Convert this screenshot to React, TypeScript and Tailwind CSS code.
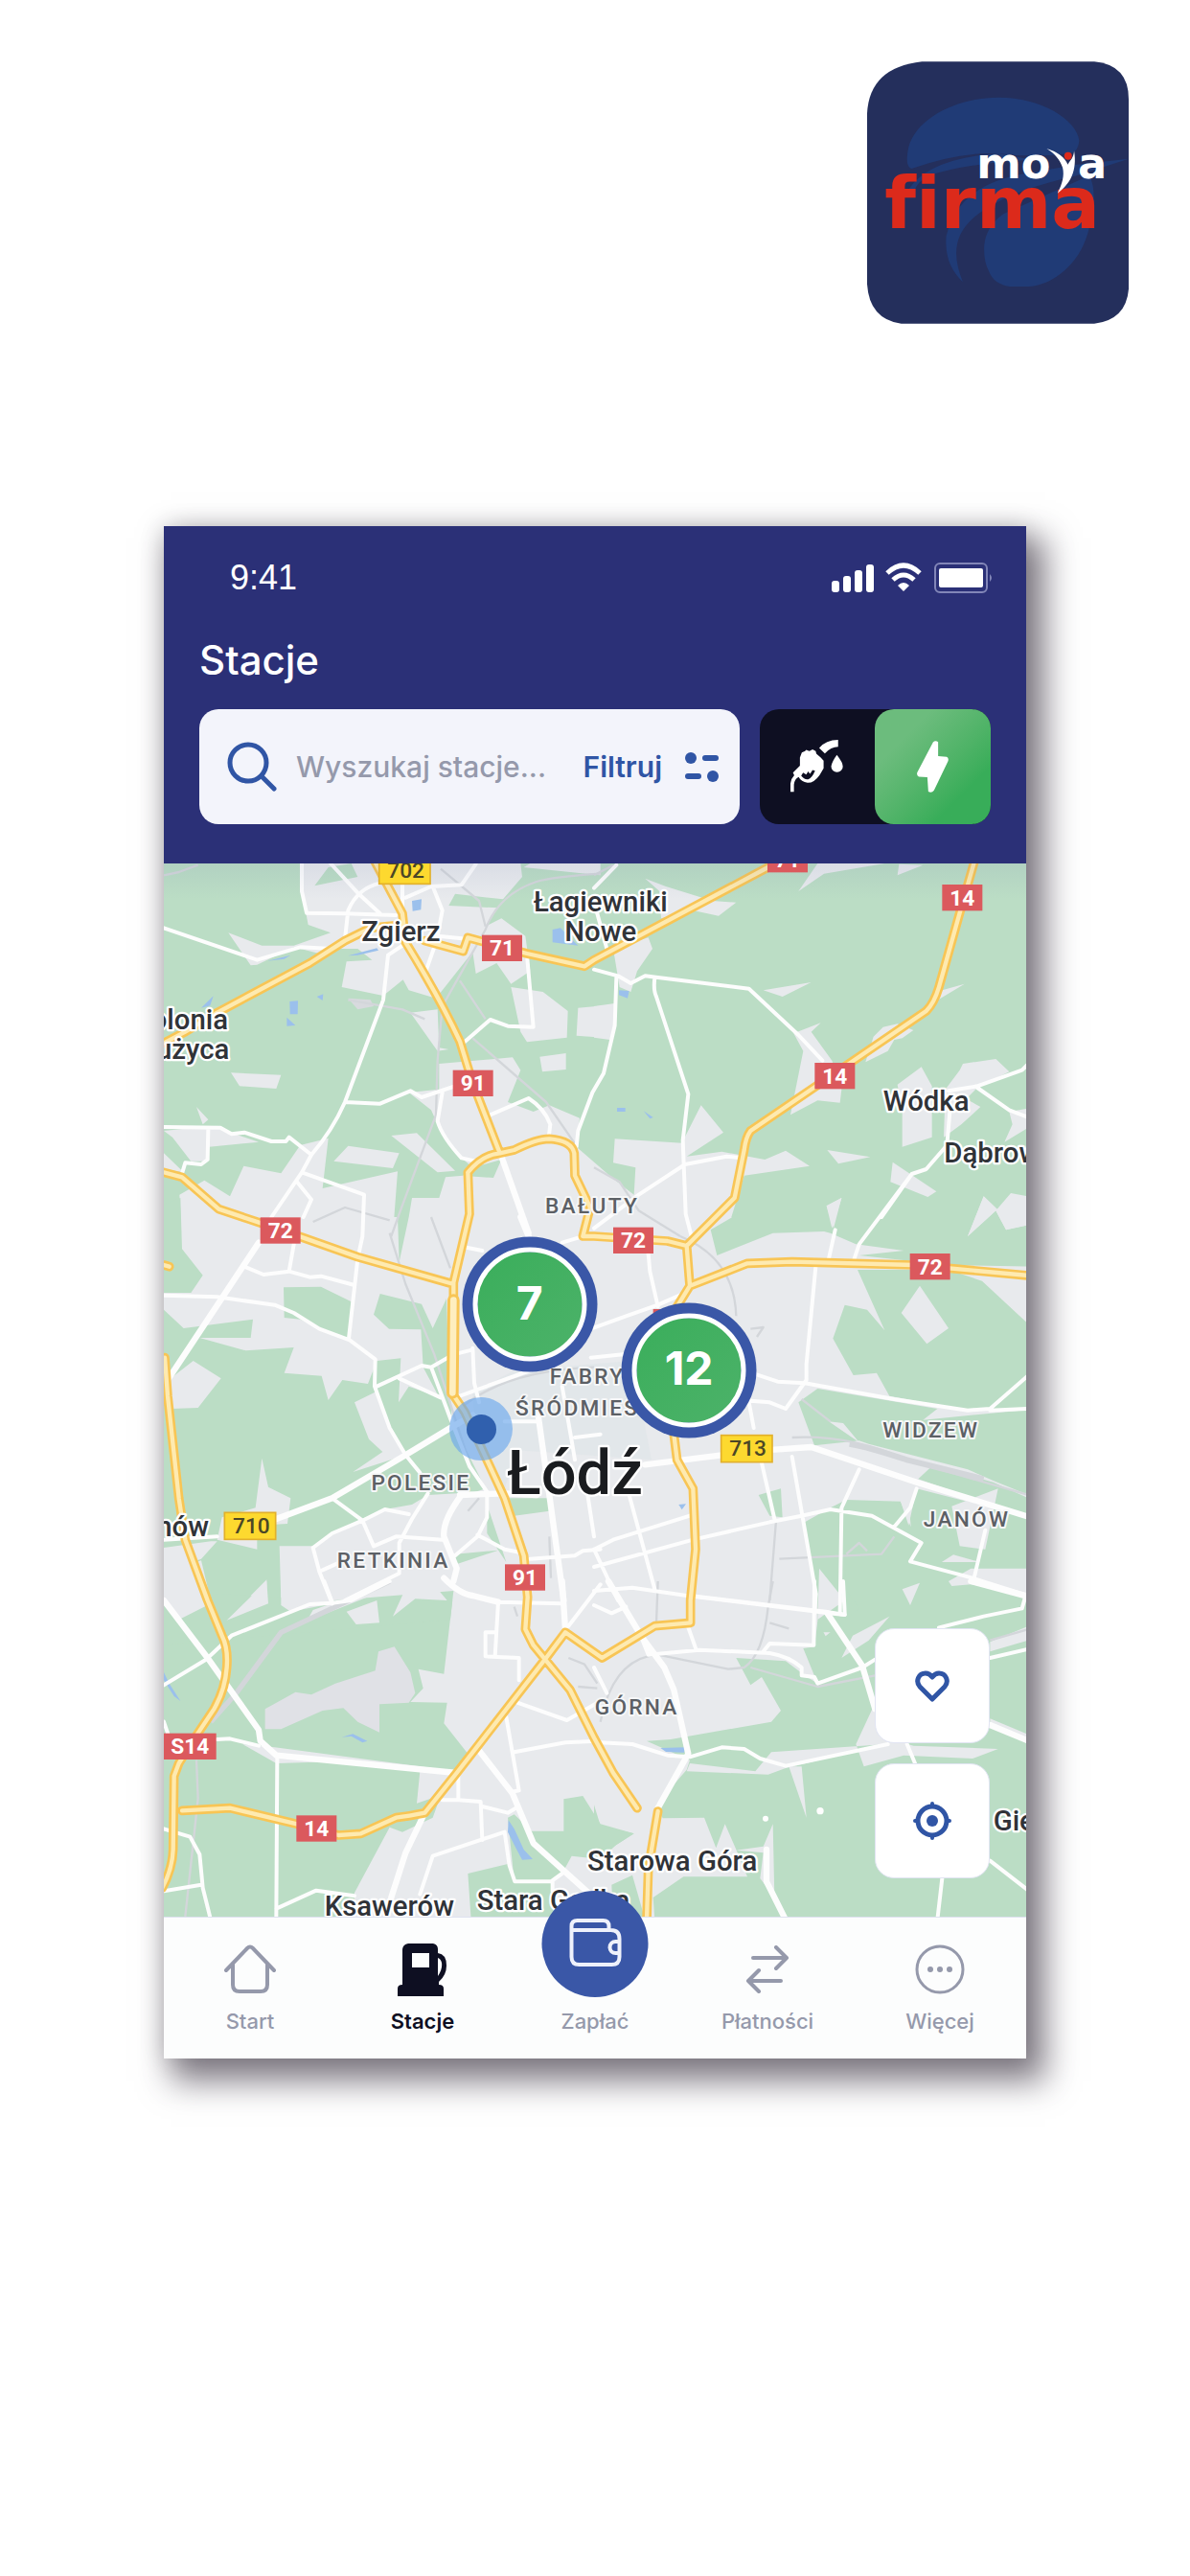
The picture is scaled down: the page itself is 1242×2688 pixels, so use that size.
import React from "react";

type Tile = {
  x: number;
  y: number;
  city: string;
  forest: string;
  field: string;
  rail: string;
  minor: string;
  main: string;
  water: string;
};

/* Each tile holds its own local coordinates and is shifted into the shared map space. */
const tiles: Tile[] = [
  {
    x: 0,
    y: 0,
    city:
      "M470,33L1150,33L1155,75L1095,145L945,128L925,165L1080,172L1040,230L1090,205L1165,260L1180,370L1120,410L1075,345L1010,378L1000,310L885,455L800,430L782,397L720,447L590,420L605,340L685,335L640,300L560,300L540,320L440,295L325,350L305,352L235,250L340,290L440,290L555,250L485,225L465,120Z M92,1260L82,1070L160,1025L240,1075L283,980L400,1003L460,915L548,893L530,1050L765,997L745,1260Z M780,1260L810,1080L895,1080L915,1015L970,1010L1000,985L965,955L890,850L870,805L800,750L895,740L895,660L1125,640L1150,680L1110,780L1190,810L1240,790L1335,830L1325,920L1440,1020L1500,1070L1500,1260Z",
    forest: "M548,45L620,33L640,75L505,103Z M1090,960L1000,985L985,1012L1065,1017Z",
    field:
      "M1120,420L1220,435L1298,495L1295,578L1170,592L1150,560Z M1330,485L1445,475L1430,580L1325,572Z M1210,638L1292,627L1292,678L1218,685Z M243,688L400,695L385,738L270,730Z M135,795L172,835L155,850Z M805,500L890,490L895,610L925,615L890,620Z M33,870L180,855L330,905L175,920L170,965L118,965L60,890Z M565,965L610,917L770,940L750,987Z M745,885L825,877L945,995L890,1000Z M33,940L95,1000L33,990Z M1160,45L1180,33L1400,33L1400,70Z",
    rail: "M1400,65Q1250,75 1200,90Q1080,130 1040,240L905,480L890,650L885,820L770,1130L745,1200 M1000,580L1230,780L1320,910 M610,460L780,490L850,520 M960,400L1040,520 M900,50L1020,150L1040,230 M500,1155L600,1110L740,1150 M33,70L80,60L140,38",
    minor:
      "M465,33L465,120L480,188L600,190L760,195 M555,33L640,125L710,190 M710,95Q640,110 610,180L600,270 M780,100L780,190 M790,140L870,105L965,100L1010,35 M875,105L905,180L890,260L990,270 M33,235L325,335L460,295L560,300 M780,290L735,320L720,460L600,780Q560,870 495,945L465,1000L370,1140 M885,280L850,380 M1170,320L1190,545L1110,542L1055,522L965,600 M600,780L710,785L805,745L840,765L960,725 M905,750L890,840Q905,890 965,955L1010,965 M1055,820L1175,768Q1225,800 1243,850L1238,890 M33,858L210,860L245,880L285,875L370,903L415,903L425,890L495,945 M172,860L170,960L150,975L100,970L88,1010 M465,1000L660,1070L655,1200L640,1270L612,1520 M450,1030L495,1085L470,1140",
    main: "M1090,950L1175,1190",
    water: "M810,150L840,145L838,178L812,182Z M1250,240L1275,235L1330,290L1250,280Z M427,465L453,463L452,505L428,505Z M418,515L445,540L418,542Z M512,450L532,442L530,462Z M150,485L188,448L178,478Z M610,322L700,298L705,305L640,320Z M358,338L430,320L410,332Z",
  },
  {
    x: 1380,
    y: 0,
    city:
      "M-40,960L60,1020L125,1070L130,985L60,970L65,895L275,908L335,790L405,875L290,950L400,935L535,960L600,932L675,980L470,1010L430,1140L360,1195L380,1260L-40,1260Z",
    forest: "",
    field:
      "M160,80L225,105L370,150L445,155L390,197L310,180L210,205L205,120Z M60,300L170,265L183,300L135,370L115,435L80,420Z M700,33L910,33L720,65L640,120Z M955,35L1030,38L950,70Z M530,430L680,405L590,450Z M625,565L710,532L680,560L745,650L775,740L770,782L700,775L615,820L655,620Z M875,575L905,545L950,535L1000,555L965,580L940,585L920,620L850,655Z M1045,470L1090,430L1160,410L1080,458Z M950,725L1025,670L1058,730L1058,890L965,920L965,810Z M1100,740L1145,680L1155,660L1258,645L1300,685L1200,735L1165,770L1210,795L1150,850L1095,890Z M1300,810L1360,800L1360,860L1285,905L1310,850Z M935,968L1072,1060L1045,1077L928,1030Z M730,930L865,952L765,973Z M728,1105L775,1080L750,1175Z M1220,1075L1262,1115L1305,1065L1360,1075L1360,1165L1290,1180L1258,1120L1170,1200Z M0,480L70,470L65,545L50,585L0,578Z",
    rail: "M0,70L60,38 M0,985L80,1030L140,1120L270,1200",
    minor:
      "M0,110L70,38 M10,190L40,300 M0,365L75,385L115,408L160,385L200,390L485,425L640,570L715,650 M70,390L65,540L30,690L-5,750L-50,870L-55,920 M190,390Q185,430 195,450L295,755L278,900L287,1130L305,1200 M0,1175L140,1070L285,975L415,950L460,955 M900,1140L995,1005L1040,990L1105,915L1115,800 M1110,745L1200,730L1340,680L1360,660 M1200,735L1300,805L1360,828 M755,1180L735,1270 M995,1005L830,1225L810,1285",
    main: "",
    water: "M78,430L110,432L105,455L78,445Z M72,798L98,798L98,810L72,810Z M155,808L185,828L175,832Z",
  },
  {
    x: 0,
    y: 1140,
    city: "M33,0L1500,0L1500,1200L33,1200Z",
    forest:
      "M33,-40L85,-60L90,100L155,182L118,237L33,237Z M33,290L95,348L312,320L305,378L145,378L290,418L440,408L410,488L527,497L548,573L592,510L672,522L700,450L775,442L768,580L800,530L900,565L935,640L1040,850L1005,862L860,870L810,900L725,915L640,950L500,1030L395,1030L400,1200L355,1200L355,1135L230,1260L33,1240L33,1110L150,1070L200,1015L180,1015L33,1035Z M408,220L525,218L620,265L612,380L520,350L460,320L410,315Z M710,240L840,272L875,348L918,255L925,480L935,640L845,470L838,352L738,350L690,305Z M765,0L800,0L770,140Z M1110,880L1240,880L1240,920L1130,935Z M945,1055L1080,1043L940,1090Z M1045,900L1105,1080L1045,990Z",
    field:
      "M125,450L212,505L140,597L55,600L48,510Z M630,580L700,545L755,690L790,745L625,798L718,735L675,695Z M340,755L360,845L430,880L420,960L325,965L325,1040L200,1010L215,940L320,910Z M33,1115L150,1075L180,1200L33,1200Z",
    rail: "M740,50L790,210L880,430L1000,800 M960,600Q1100,480 1380,470 M985,920L1020,880 M1240,1000L1245,1130 M870,0L930,160",
    minor:
      "M440,85L425,170 M285,155L345,180L425,170L490,188L525,185L630,213 M33,245L200,250L380,275L440,300L520,350L615,385L695,445L693,530L740,660L790,745L835,800 M700,530L840,465L870,470L940,430L1000,415 M870,470L930,630L990,780L1045,860L1045,940L1015,1000L945,1060 M770,505L900,565 M560,880L655,950L690,1030L760,1000L905,1010 M860,865L810,945L770,1020L770,1110 M33,1010L200,1000 M500,1035L560,990L655,950L725,915L800,930 M500,1035L520,1110L560,1210 M600,1200L770,1115 M530,1105L575,1085 M1015,995L1100,1040L1150,1050 M1000,410L1005,520L1020,580 M960,560L1180,480 M1280,530L1310,700L1320,760 M1360,870L1380,1000 M1180,1070L1320,1060L1345,1045L1400,1040 M980,95L1030,105 M1280,80L1330,65 M1320,690L1400,680 M1100,640L1200,640",
    main: "M330,80L45,510 M385,945L560,880L790,745L930,660L1000,620 M965,870Q905,950 910,1000L950,1100L940,1140 M960,870L1100,865L1200,870 M1205,620L1240,870L1285,1200 M1150,0L1175,60",
    water: "",
  },
  {
    x: 1380,
    y: 1140,
    city: "M-60,0L1400,0L1400,1260L-60,1260Z",
    forest:
      "M365,40L450,-10L440,-60L1400,-60L1400,155L1110,150L830,120L970,105L820,85L740,50L720,45L560,50L385,120Z M825,165L1110,165L1215,200L1360,335L1360,605L1170,605L925,560L885,488L812,495L748,380L785,275L855,290L910,355Z M640,580L700,537L1075,600L1030,635L1360,603L1360,870L1250,825L1170,790L860,710L830,700L690,715Z M1015,820L1060,778L1250,830L1360,880L1360,940Z M660,955L740,910L790,885L960,890L985,965L1010,850L1360,940L1360,1130L1300,1105L1125,1057L1065,1095L1125,1160L1360,1230L1360,1300L700,1300L700,1200Z M515,870L585,850L590,940L550,935Z",
    field:
      "M1020,215L1110,348L1042,397L962,300Z M735,640L780,645L830,705Z M1120,905L1265,850L1225,1040L1145,1030Z M705,1100L785,1200L700,1260Z M960,890L985,885L992,970Z M728,-35L775,-60L745,35Z M1220,-65L1262,-25L1360,-65L1360,25L1290,40L1258,-20L1170,60Z",
    rail: "M270,60Q440,130 445,310 M580,1070L900,1055L940,1000 M570,950L550,1200 M620,690Q800,680 980,760L1360,870 M650,570L740,640 M790,1055L830,1020L855,1045 M490,350L530,345L510,375",
    minor:
      "M-10,350L100,310L200,275L290,235 M170,115L175,170L200,280 M-10,440L90,430 M500,490L575,515L660,520L940,570L1170,605L1240,600L1360,495 M695,145L665,460L665,510L600,600L550,580L490,575 M1240,605L1360,600 M485,580L500,660 M525,770L565,945 M620,750L695,1180L690,1240 M830,790L775,910L770,1240 M1010,850L990,910L940,970 M0,1095L310,1010L550,955L650,935L740,915L870,935L1025,1020L990,1078L1185,1130L1360,1185 M1225,980L1190,1130 M0,1040L60,1010L300,935 M110,870L190,1165 M0,1040L75,1200 M0,1170L120,1160L290,1185L735,1240L785,1245",
    main: "M160,775L400,745 M565,728L680,720L1010,830L1360,938",
    water: "M265,900L288,898L275,916Z",
  },
  {
    x: 0,
    y: 2280,
    city: "M940,-60L1500,-60L1500,1060L630,1060L630,975L740,770L780,785L875,740L900,670L825,695L835,595L950,600L985,540L910,445L920,380L805,378L845,335L830,275L910,290L940,30Z",
    forest:
      "M1185,782L1285,782L1285,682L1345,672L1400,760L1505,790L1450,825L1400,870L1310,860L1280,915L1245,940L1130,940L1110,740L1130,730Z M985,915L1110,885L1140,940L1245,940L1260,1060L995,1060Z M33,30L565,60L940,30L930,120L33,200Z",
    field:
      "M33,-60L140,-60L180,70L85,118L33,65Z M400,-80L540,-80L560,70L430,95L400,75Z M355,0L360,70L230,122Z M605,95L700,60L708,130L635,135Z M750,110L800,0L870,0L920,60L820,55Z M280,510L380,520L950,595L560,565L385,570Z M500,90L630,45L720,30L480,125Z",
    rail: "M135,560L140,680L100,1050 M1130,80L1140,110 M1300,240L1350,260L1390,320 M1330,330L1390,335",
    minor:
      "M33,325L165,245L245,170L490,72L560,68L620,60L740,0 M200,495L240,493L330,515 M388,550L385,1060 M385,1025L510,968L630,985 M33,775L115,800L145,855L155,960L180,1060 M33,970L150,950 M33,440L45,475 M955,600L955,685L1025,690L1030,810 M905,685L955,685 M1030,705L1110,725L1135,710 M1100,785L875,860L835,980 M1100,785L1115,890L1132,940L1245,940L1280,915 M1250,940L1250,970 M1105,425L1145,655L1120,660 M1130,535L1290,505L1390,500 M1080,65L1280,70 M1080,65L1070,235 M1145,310L1145,240L1040,235L1040,160L1070,160 M1300,140L1400,10 M1140,380L1295,435L1400,375 M535,0L560,65",
    main: "M33,60L170,240L330,465L335,500L385,545L950,600 M850,725L790,850L745,990 M1020,530L1125,665L1190,820L1390,1000 M910,-10Q960,40 1000,45L1080,65 M1280,0L1290,150",
    water: "M33,285L50,320L85,375L65,360L33,310Z M590,488L625,478L670,500L655,505L620,485Z M1112,748L1130,775L1160,840L1188,870L1155,872L1135,835L1110,785Z",
  },
  {
    x: 1380,
    y: 2280,
    city: "M-60,0L800,0L800,500L560,1060L-60,1060Z",
    forest:
      "M785,20L790,-60L1380,-60L1380,1060L190,1060L185,990L280,925L480,925L445,840L410,760L382,835L345,740L215,742L195,700L290,590L300,560L165,500L240,495L555,440L585,405L525,300L490,325L445,240L600,250L660,295L700,320L655,210L690,205L700,125L725,172L830,85Z M0,700L20,765L125,790L70,825L0,850Z M55,950L120,920L160,1060L60,1060Z",
    field:
      "M990,75L965,25L1020,5Z M925,110L860,185L775,240L810,170Z M885,370L820,510L845,580L970,545L1185,555L1265,525L1000,515L890,480Z M555,535L915,510L600,585L545,605L290,595L300,570L505,595Z M610,580L650,580L665,740Z M560,760L565,990L520,930L530,850L445,842L530,830Z M1110,0L1180,-40L1360,-40L1360,45L1180,10L1120,15Z M1240,190L1360,140L1360,185L1240,220Z M1240,430L1360,480L1360,500L1240,455Z",
    rail: "M20,440Q60,240 200,230L420,275L470,270Q530,230 545,80L560,0 M490,270L700,330L880,295 M1240,185L1360,150 M550,130L610,148 M200,0L195,130",
    minor:
      "M290,130L320,215 M150,180L170,230L330,215L550,225Q610,235 650,270L650,295L690,300L700,320L840,270L880,245 M690,0L688,200L550,195L530,220 M780,0L785,100 M300,45L725,95L785,105 M1080,145L1220,110L1340,85L1350,50 M1240,240L1360,212 M20,505L120,510L230,545L300,550L400,520L470,525L520,555L600,578L920,510 M980,510L1005,570 M1240,875L1360,968 M1090,930L1075,1060 M0,270L40,350 M0,75L55,100L100,80",
    main: "M45,0L150,175L220,270L250,340L295,540L200,710 M730,100L840,265L880,400 M1180,0L1360,48 M1240,450L1360,500 M540,840L540,940L600,1060",
    water: "M208,522L285,520L282,536L225,534Z",
  },
];

const highways =
  "M690,20L780,190L790,280Q900,460 960,590L1000,720L1085,940 M33,595L100,560L200,500L490,345L600,275L680,235L780,225 M850,275L970,308L985,265L1170,315L1350,355L1380,335L1925,45 " +
  "M985,1000Q1030,945 1085,940L1130,930Q1200,895 1240,895Q1310,900 1318,940L1320,1010L1368,1110L1345,1200L1380,1200L1610,1215L1670,1230 " +
  "M985,1000L990,1130L940,1345L940,1540L935,1690L975,1750L1100,2020L1160,2200L1172,2330L1165,2430L1190,2480L1305,2620L1380,2770L1440,2880L1515,2990 " +
  "M33,1000L90,1015L205,1115L340,1160L470,1205L640,1265L940,1350 " +
  "M2570,30L2530,170L2460,420Q2445,470 2420,495L1870,870Q1855,890 1850,930L1820,1080L1670,1230L1680,1355L1640,1420L1630,1820L1640,1900L1690,1990L1698,2180L1682,2340L1682,2410L1570,2420L1405,2520L1290,2440L1230,2520L950,2880L850,3005Q800,3015 760,3020L650,3070L580,3075L450,3040L240,2990L90,2998 " +
  "M1680,1355L1860,1285L2000,1280L2380,1290L2740,1323 M33,1290L50,1295 " +
  "M36,1580L45,1700L80,2020L100,2150L170,2340L215,2450Q235,2490 230,2550Q225,2620 190,2680L140,2755L80,2850L65,2890L62,3120Q60,3180 28,3240 M1580,3000L1550,3180L1545,3340";

const roadBadges: { x: number; y: number; label: string; w?: number }[] = [
  { x: 1092, y: 298, label: "71" },
  { x: 1001, y: 721, label: "91" },
  { x: 398, y: 1182, label: "72" },
  { x: 1986, y: 20, label: "71" },
  { x: 2533, y: 140, label: "14" },
  { x: 2134, y: 698, label: "14" },
  { x: 1503, y: 1213, label: "72" },
  { x: 2432, y: 1295, label: "72" },
  { x: 1164, y: 2268, label: "91" },
  { x: 115, y: 2797, label: "S14", w: 164 },
  { x: 511, y: 3054, label: "14" },
];

const regionalBadges = [
  { x: 787, y: 55, label: "702" },
  { x: 303, y: 2107, label: "710" },
  { x: 1858, y: 1865, label: "713" },
];

type Anchor = "start" | "middle" | "end";
const towns: { x: number; y: number; t: string; a?: Anchor }[] = [
  { x: 775, y: 275, t: "Zgierz" },
  { x: 1400, y: 183, t: "Łagiewniki" },
  { x: 1400, y: 275, t: "Nowe" },
  { x: 234, y: 553, t: "olonia", a: "end" },
  { x: 238, y: 645, t: "użyca", a: "end" },
  { x: 2420, y: 808, t: "Wódka" },
  { x: 2476, y: 970, t: "Dąbrow", a: "start" },
  { x: 174, y: 2138, t: "nów", a: "end" },
  { x: 739, y: 3326, t: "Ksawerów" },
  { x: 1013, y: 3308, t: "Stara Gadka", a: "start" },
  { x: 1625, y: 3186, t: "Starowa Góra" },
  { x: 2630, y: 3060, t: "Gie", a: "start" },
];

const districts: { x: number; y: number; t: string; a?: Anchor }[] = [
  { x: 1374, y: 1128, t: "BAŁUTY" },
  { x: 1241, y: 1662, t: "FABRYCZNA", a: "start" },
  { x: 1134, y: 1761, t: "ŚRÓDMIEŚCIE", a: "start" },
  { x: 838, y: 1995, t: "POLESIE" },
  { x: 752, y: 2238, t: "RETKINIA" },
  { x: 2435, y: 1830, t: "WIDZEW" },
  { x: 2547, y: 2108, t: "JANÓW" },
  { x: 1514, y: 2696, t: "GÓRNA" },
];

function CityMap() {
  const layer = (key: keyof Tile, props: React.SVGProps<SVGPathElement>) =>
    tiles.map((t) => (
      <path key={`${key}-${t.x}-${t.y}`} transform={`translate(${t.x} ${t.y})`} d={String(t[key])} {...props} />
    ));
  return (
    <svg viewBox="33 33 2700 3297" className="block w-full" role="img" aria-label="Mapa: Łódź">
      <defs>
        <linearGradient id="topShade" x1="0" y1="0" x2="0" y2="1">
          <stop offset="0" stopColor="#5b6aa0" stopOpacity="0.1" />
          <stop offset="1" stopColor="#5b6aa0" stopOpacity="0" />
        </linearGradient>
      </defs>
      <rect x="33" y="33" width="2700" height="3297" fill="#bbddc5" />
      {layer("city", { fill: "#e8eaed" })}
      {layer("forest", { fill: "#bbddc5" })}
      {layer("field", { fill: "#e8eaed" })}
      <path
        transform="translate(0 2280)"
        d="M350,400L445,347L495,355L570,320L695,280L705,220L755,205L805,285L820,350L800,380L708,385L708,473L640,440L595,397L530,405L400,463L350,463Z"
        fill="#e0e1e6"
      />
      <path d="M610,455L680,460L690,480L640,490Z" fill="#d8dade" />
      <path d="M1000,1690L1130,1620L1500,1590L1560,1900L1140,1870L1100,1990L1010,1800Z" fill="#dfe6e8" opacity="0.7" />
      <g fill="none" stroke="#d3d6da" strokeLinejoin="round">
        {layer("rail", { strokeWidth: 7 })}
        <path d="M740,2280L400,2440L260,2630L180,2720" strokeWidth="16" />
        <path d="M2180,1850Q2240,1860 2360,1900L2600,1960" strokeWidth="18" />
      </g>
      {layer("water", { fill: "#9bc0ec" })}
      <g fill="none" stroke="#fdfdfd" strokeLinejoin="round" strokeLinecap="round">
        {layer("minor", { strokeWidth: 12 })}
        {layer("main", { strokeWidth: 19 })}
      </g>
      <circle cx="1917" cy="3023" r="9" fill="#fff" />
      <circle cx="2088" cy="2999" r="11" fill="#fff" />
      <g fill="none" strokeLinejoin="round" strokeLinecap="round">
        <path d={highways} stroke="#f8c555" strokeWidth="29" />
        <path d={highways} stroke="#feeab0" strokeWidth="13" />
        <path d="M940,1400L937,1690" stroke="#f8c555" strokeWidth="38" />
        <path d="M940,1400L937,1690" stroke="#feeebf" strokeWidth="20" />
      </g>
      <rect x="33" y="33" width="2700" height="110" fill="url(#topShade)" />

      <g fontFamily="Roboto, 'Liberation Sans', sans-serif" fontWeight="500">
        <g fontSize="88" fill="#303338" stroke="#fff" strokeWidth="14" strokeLinejoin="round" paintOrder="stroke">
          {towns.map((l) => (
            <text key={l.t} x={l.x} y={l.y} textAnchor={l.a ?? "middle"}>
              {l.t}
            </text>
          ))}
        </g>
        <g
          fontSize="68"
          className="tracking-widest"
          fill="#5c6065"
          stroke="#f6f7f8"
          strokeWidth="12"
          strokeLinejoin="round"
          paintOrder="stroke"
        >
          {districts.map((l) => (
            <text key={l.t} x={l.x} y={l.y} textAnchor={l.a ?? "middle"}>
              {l.t}
            </text>
          ))}
        </g>
        <text
          x="1320"
          y="2008"
          textAnchor="middle"
          fontSize="195"
          fill="#1a1c1f"
          stroke="#fff"
          strokeWidth="14"
          strokeLinejoin="round"
          paintOrder="stroke"
        >
          Łódź
        </text>
      </g>

      <g fontFamily="Roboto, 'Liberation Sans', sans-serif" fontWeight="700" fontSize="68" textAnchor="middle">
        <rect x="1565" y="1428" width="30" height="30" fill="#db595d" />
        {roadBadges.map((b) => {
          const w = b.w ?? 126;
          return (
            <g key={`${b.x}-${b.y}`}>
              <rect x={b.x - w / 2} y={b.y - 41} width={w} height="82" fill="#db595d" />
              <text x={b.x} y={b.y + 24} fill="#fff">
                {b.label}
              </text>
            </g>
          );
        })}
        {regionalBadges.map((b) => (
          <g key={b.label}>
            <rect x={b.x - 80} y={b.y - 42} width="160" height="84" fill="#fdd92f" stroke="#e2b02c" strokeWidth="5" />
            <text x={b.x + 4} y={b.y + 23} fontWeight="500" fill="#4b4726">
              {b.label}
            </text>
          </g>
        ))}
      </g>
    </svg>
  );
}

function Logo() {
  return (
    <svg viewBox="43 42 820 822" className="block h-[274px] w-[273px]" role="img" aria-label="moya firma">
      <path
        d="M215,42H755Q863,52 863,160V755Q855,852 755,864H150Q50,850 43,740V205Q50,60 215,42Z"
        fill="#242f5c"
      />
      <g fill="#203b76">
        <path d="M182,378Q160,370 173,310C200,215 330,155 455,155C590,155 700,225 708,290Q705,325 680,330Q560,345 455,330Q330,325 182,378Z" />
        <path d="M172,445Q235,345 455,330L560,350Q360,360 235,400Q200,420 190,450Z" />
        <path d="M863,347L700,365L560,390Q330,420 291,590C286,660 310,700 343,733C310,650 305,570 420,500Q520,440 700,400Z" />
        <path d="M410,620Q415,560 470,520L740,400Q770,460 735,580C700,700 600,747 550,747H490Q440,740 425,700Q408,670 410,620Z" />
      </g>
      <g fontFamily="'DejaVu Sans', sans-serif" fontWeight="700">
        <text x="386" y="407" fontSize="134" fill="#fff">
          mo
        </text>
        <text x="704" y="407" fontSize="134" fill="#fff">
          a
        </text>
        <text x="98" y="565" fontSize="226" fill="#dc2a1b" style={{ fontVariantLigatures: "none" }}>
          firma
        </text>
      </g>
      <path d="M606,315C640,325 665,345 672,365C680,350 690,345 692,322C702,385 680,425 640,455C655,425 662,400 656,375C648,350 630,330 606,315Z" fill="#fff" />
      <circle cx="673" cy="338" r="12" fill="#dc2a1b" />
    </svg>
  );
}

function StatusIcons() {
  return (
    <svg viewBox="0 0 166 32" className="h-8 w-[166px] overflow-visible" aria-hidden="true">
      <g fill="#fff">
        <rect x="0" y="19" width="8" height="12" rx="3" />
        <rect x="12" y="14" width="8" height="17" rx="3" />
        <rect x="24" y="8" width="8" height="23" rx="3" />
        <rect x="36" y="2" width="8" height="29" rx="3" />
        <rect x="112" y="6" width="46" height="20" rx="2" />
        <path d="M75,30L69,24Q75,18 81,24Z" />
      </g>
      <g fill="none" stroke="#fff" strokeWidth="5">
        <path d="M58,11Q75,-5 92,11" />
        <path d="M64,18Q75,8 86,18" />
      </g>
      <rect x="108" y="1" width="54" height="30" rx="5" fill="none" stroke="#8286b8" strokeWidth="2" />
      <path d="M165,12Q169,16 165,20Z" fill="#8286b8" />
    </svg>
  );
}

function NozzleIcon() {
  return (
    <svg viewBox="0 0 170 170" className="size-14" aria-hidden="true">
      <path d="M91,26Q112,0 151,0V22Q128,22 109,43Z" fill="#fff" />
      <path d="M147,48Q166,72 166,84A18,18 0 0 1 129,84Q131,70 147,48Z" fill="#fff" />
      <path
        fillRule="evenodd"
        d="M30,56L36,40L46,36L50,32L60,36L70,30L80,36L82,44L96,56L105,66V90L92,112Q74,137 54,136Q34,134 26,118Q13,124 11,142V165H0V138Q2,122 12,112L8,104L30,82ZM40,104L34,114Q44,127 56,125Q68,122 78,98L70,96L62,108L56,100L50,110Z"
        fill="#fff"
      />
    </svg>
  );
}

function Marker({ children, place }: { children: string; place: string }) {
  return (
    <button
      type="button"
      aria-label={`${children} stacji`}
      className={`absolute flex size-[141px] -translate-x-1/2 -translate-y-1/2 items-center justify-center rounded-full bg-[#3a57a7] p-[11px] ${place}`}
    >
      <span className="flex size-full items-center justify-center rounded-full border-[5px] border-white bg-linear-to-br from-[#3aae5b] to-[#4cb269] pb-1 text-[48px] font-bold text-white">
        {children}
      </span>
    </button>
  );
}

function NavItem({ label, active, children }: { label: string; active?: boolean; children: React.ReactNode }) {
  return (
    <a
      href="#"
      aria-current={active ? "page" : undefined}
      className={`flex flex-col items-center gap-2 pt-6 text-[22px] leading-8 ${
        active ? "font-semibold text-[#0e0f22]" : "font-medium text-[#9599ab]"
      }`}
    >
      <span className="flex h-[60px] items-center justify-center">{children}</span>
      <span>{label}</span>
    </a>
  );
}

export default function App() {
  return (
    <div className="min-h-screen bg-white px-16 pt-16 font-['Inter','Noto_Sans',sans-serif]">
      <header className="flex justify-end">
        <Logo />
      </header>

      <main className="mx-[107px] mt-[211px] bg-[#fcfdfd] shadow-[14px_18px_32px_6px_rgba(50,42,56,0.6),0_0_24px_rgba(0,0,0,0.15)]">
        <section className="bg-[#2b3077] px-[37px] pt-[38px] pb-[41px]">
          <div className="flex h-8 items-center justify-between pl-8">
            <time className="font-['Liberation_Sans',sans-serif] text-[36px] leading-9 text-white">9:41</time>
            <StatusIcons />
          </div>
          <h1 className="mt-11 text-[42px] leading-[52px] font-medium text-white">Stacje</h1>

          <div className="mt-[25px] flex gap-[21px]">
            <div className="flex h-[120px] min-w-0 flex-1 items-center rounded-[20px] bg-[#f3f4fb] pr-[22px] pl-[29px]">
              <svg viewBox="0 0 52 52" className="size-[52px] shrink-0" fill="none" stroke="#3055a5" strokeWidth="5" strokeLinecap="round" aria-hidden="true">
                <circle cx="22" cy="22" r="19" />
                <path d="M36,36L49,49" />
              </svg>
              <input
                type="text"
                aria-label="Wyszukaj stacje"
                placeholder="Wyszukaj stacje..."
                className="ml-5 min-w-0 flex-1 bg-transparent text-[30px] font-medium text-[#9599ab] outline-none placeholder:text-[#9599ab]"
              />
              <button type="button" className="flex shrink-0 items-center gap-6 text-[30px] font-semibold text-[#3055a5]">
                Filtruj
                <svg viewBox="0 0 35 32" className="h-8 w-[35px]" fill="#3055a5" aria-hidden="true">
                  <circle cx="6" cy="7" r="6" />
                  <rect x="18" y="4" width="17" height="6" rx="3" />
                  <rect x="0" y="23" width="17" height="6" rx="3" />
                  <circle cx="29" cy="26" r="6" />
                </svg>
              </button>
            </div>
            <div className="flex h-[120px] w-[241px] rounded-[20px] bg-[#0e0f22]" role="group" aria-label="Rodzaj stacji">
              <button type="button" aria-label="Paliwo" className="flex flex-1 items-center justify-center">
                <NozzleIcon />
              </button>
              <button
                type="button"
                aria-label="Ładowanie"
                aria-pressed="true"
                className="flex w-[121px] items-center justify-center rounded-[20px] bg-linear-to-br from-[#6cbc7d] from-25% to-[#38ad59] to-75%"
              >
                <svg viewBox="0 0 100 162" className="h-[54px] w-[33px]" fill="#fff" aria-hidden="true">
                  <path d="M51,4Q58,-3 67,3V48L94,50Q102,54 98,64L54,156Q47,165 36,160L33,114L6,113Q-2,109 1,99Z" />
                </svg>
              </button>
            </div>
          </div>
        </section>

        <section className="relative overflow-hidden">
          <CityMap />
          <div
            aria-label="Twoja lokalizacja"
            className="absolute top-[53.7%] left-[36.8%] flex size-[66px] -translate-x-1/2 -translate-y-1/2 items-center justify-center rounded-full bg-[#6ba7ec]/65"
          >
            <span className="size-[31px] rounded-full bg-[#3060ae]" />
          </div>
          <Marker place="top-[41.9%] left-[42.4%]">7</Marker>
          <Marker place="top-[48.1%] left-[60.9%]">12</Marker>
          <div className="absolute right-[38px] bottom-10 flex flex-col gap-[21px]">
            <button
              type="button"
              aria-label="Ulubione"
              className="flex size-[120px] items-center justify-center rounded-[20px] border border-[#e2e5f3] bg-white"
            >
              <svg viewBox="0 0 36 33" className="h-[33px] w-9" fill="none" stroke="#3055a5" strokeWidth="5" strokeLinejoin="round" aria-hidden="true">
                <path d="M18,30L5,17C0,11 4,3 11,3Q15,3 18,7Q21,3 25,3C32,3 36,11 31,17Z" />
              </svg>
            </button>
            <button
              type="button"
              aria-label="Moja pozycja"
              className="flex size-[120px] items-center justify-center rounded-[20px] border border-[#e2e5f3] bg-white"
            >
              <svg viewBox="0 0 40 40" className="size-10" fill="none" stroke="#3055a5" strokeWidth="5" strokeLinecap="round" aria-hidden="true">
                <circle cx="20" cy="20" r="15" />
                <circle cx="20" cy="20" r="6" fill="#3055a5" stroke="none" />
                <path d="M20,2V4M20,36V38M2,20H4M36,20H38" strokeWidth="4" />
              </svg>
            </button>
          </div>
        </section>

        <nav className="relative grid h-[148px] grid-cols-5 border-t border-[#dfe2f1] bg-[#fcfdfd]">
          <NavItem label="Start">
            <svg viewBox="0 0 54 52" className="h-[52px] w-[54px]" fill="none" stroke="#9599ab" strokeWidth="4" strokeLinecap="round" strokeLinejoin="round" aria-hidden="true">
              <path d="M2,27L24,4Q27,1 30,4L52,27" />
              <path d="M9,21V42Q9,49 16,49H38Q45,49 45,42V21" />
            </svg>
          </NavItem>
          <NavItem label="Stacje" active>
            <svg viewBox="0 0 52 55" className="h-[55px] w-[52px]" aria-hidden="true">
              <path
                fillRule="evenodd"
                d="M11,0H37Q42,1 42,6V10Q51,11 51,23Q51,33 43,40V43Q48,43 48,47V55H0V47Q0,43 5,43V7Q5,1 11,0ZM15,10V25H33V10ZM42,15V34Q47,27 46,20Q45,16 42,15Z"
                fill="#0e0f22"
              />
            </svg>
          </NavItem>
          <NavItem label="Zapłać">
            <span className="absolute -top-7 left-1/2 flex size-[111px] -translate-x-1/2 items-center justify-center rounded-full bg-[#3a57a7]">
              <svg viewBox="0 0 56 52" className="mb-1 h-[52px] w-14" fill="none" stroke="#eef1fb" strokeWidth="4" strokeLinejoin="round" aria-hidden="true">
                <path d="M42,13V9Q42,3 36,3H9Q3,3 3,9V41Q3,49 11,49H45Q53,49 53,41V22Q53,13 44,13H3" />
                <path d="M53,25H49A6,6 0 0 0 49,37H53" />
              </svg>
            </span>
          </NavItem>
          <NavItem label="Płatności">
            <svg viewBox="0 0 46 50" className="h-[50px] w-[46px]" fill="none" stroke="#9599ab" strokeWidth="4" strokeLinecap="round" strokeLinejoin="round" aria-hidden="true">
              <path d="M8,13H43M32,2L43,13L32,24" />
              <path d="M37,37H3M14,26L3,37L14,48" />
            </svg>
          </NavItem>
          <NavItem label="Więcej">
            <svg viewBox="0 0 52 52" className="size-[52px]" fill="#9599ab" aria-hidden="true">
              <circle cx="26" cy="26" r="24" fill="none" stroke="#9599ab" strokeWidth="3" />
              <circle cx="16" cy="26" r="3" />
              <circle cx="26" cy="26" r="3" />
              <circle cx="36" cy="26" r="3" />
            </svg>
          </NavItem>
        </nav>
      </main>
    </div>
  );
}
